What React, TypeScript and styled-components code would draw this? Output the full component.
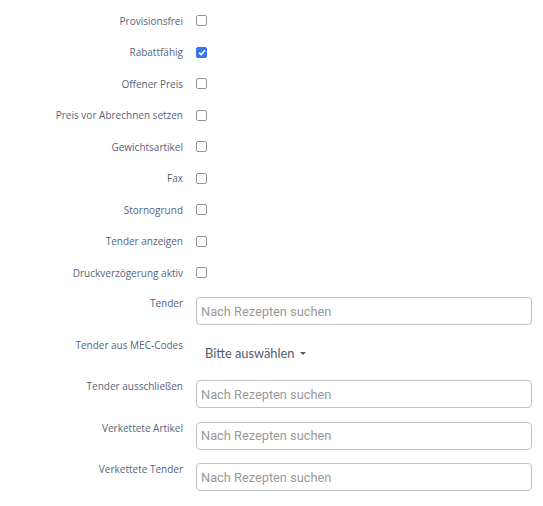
import styled, { createGlobalStyle } from 'styled-components';

const GlobalStyle = createGlobalStyle`
  html, body {
    margin: 0;
    padding: 0;
    background: #ffffff;
  }
`;

const Form = styled.form`
  width: 543px;
  padding-top: 5px;
  font-family: 'Open Sans', sans-serif;
`;

const Row = styled.div<{ $field?: boolean }>`
  display: grid;
  grid-template-columns: 183px 336px;
  column-gap: 13px;
  align-items: ${({ $field }) => ($field ? 'start' : 'center')};
  height: ${({ $field }) => ($field ? '41.5px' : '31.5px')};
  padding-top: ${({ $field }) => ($field ? '8.5px' : '0')};
  box-sizing: border-box;
`;

const Label = styled.label`
  text-align: right;
  font-size: 10px;
  line-height: 12px;
  color: #58637a;
  white-space: nowrap;
`;

const Box = styled.span<{ $checked?: boolean }>`
  width: 11px;
  height: 11px;
  box-sizing: border-box;
  border-radius: 2px;
  border: 1px solid ${({ $checked }) => ($checked ? '#3573f0' : '#959595')};
  background: ${({ $checked }) => ($checked ? '#3573f0' : '#ffffff')};
  display: flex;
  align-items: center;
  justify-content: center;
`;

const SearchInput = styled.input`
  width: 336px;
  height: 28px;
  box-sizing: border-box;
  border: 1px solid #c2c2c2;
  border-radius: 4px;
  padding: 0 4px;
  font-family: Roboto, 'Liberation Sans', sans-serif;
  font-size: 12.8px;
  color: #333;
  outline: none;

  &::placeholder {
    color: #9a9a9a;
  }
`;

const Select = styled.div`
  display: flex;
  align-items: center;
  gap: 6px;
  height: 28px;
  padding-left: 9px;
  font-family: Lato, sans-serif;
  font-size: 12.8px;
  color: #4f5a70;
`;

const Caret = styled.span`
  width: 0;
  height: 0;
  border-left: 3px solid transparent;
  border-right: 3px solid transparent;
  border-top: 3px solid #4f5a70;
  margin-top: 1px;
`;

const flags = [
  { label: 'Provisionsfrei', checked: false },
  { label: 'Rabattfähig', checked: true },
  { label: 'Offener Preis', checked: false },
  { label: 'Preis vor Abrechnen setzen', checked: false },
  { label: 'Gewichtsartikel', checked: false },
  { label: 'Fax', checked: false },
  { label: 'Stornogrund', checked: false },
  { label: 'Tender anzeigen', checked: false },
  { label: 'Druckverzögerung aktiv', checked: false },
];

function Checkbox({ checked }: { checked: boolean }) {
  return (
    <Box $checked={checked}>
      {checked && (
        <svg width="8" height="7" viewBox="0 0 8 7">
          <path d="M1 3.6 L3.1 5.6 L7 1.2" fill="none" stroke="#fff" strokeWidth="1.6" />
        </svg>
      )}
    </Box>
  );
}

function SearchRow({ label }: { label: string }) {
  return (
    <Row $field>
      <Label>{label}</Label>
      <SearchInput placeholder="Nach Rezepten suchen" />
    </Row>
  );
}

export default function App() {
  return (
    <>
      <GlobalStyle />
      <Form>
        {flags.map((f) => (
          <Row key={f.label}>
            <Label>{f.label}</Label>
            <Checkbox checked={f.checked} />
          </Row>
        ))}
        <SearchRow label="Tender" />
        <Row $field>
          <Label>Tender aus MEC-Codes</Label>
          <Select>
            Bitte auswählen
            <Caret />
          </Select>
        </Row>
        <SearchRow label="Tender ausschließen" />
        <SearchRow label="Verkettete Artikel" />
        <SearchRow label="Verkettete Tender" />
      </Form>
    </>
  );
}
